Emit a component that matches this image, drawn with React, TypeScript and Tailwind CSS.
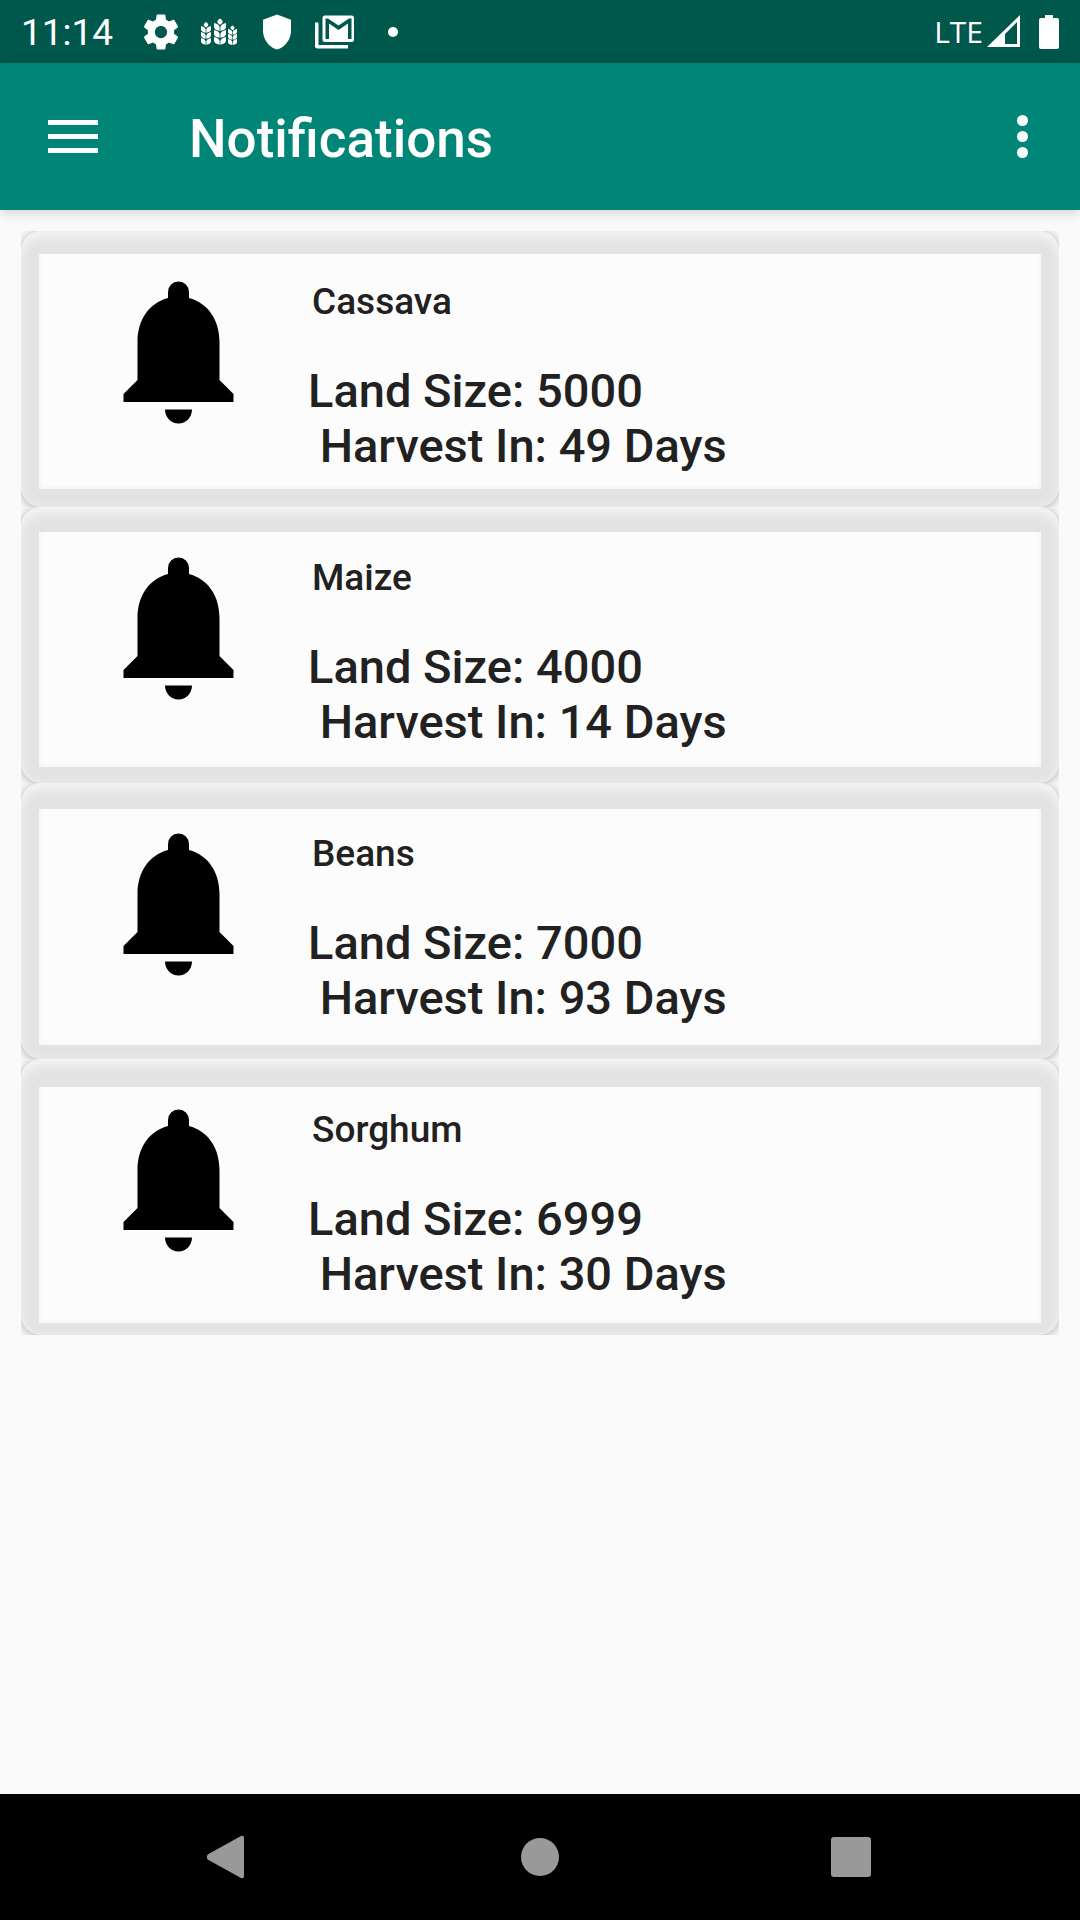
import React from "react";

type Notice = { crop: string; size: string; days: string; frame: string };

const notices: Notice[] = [
  { crop: "Cassava", size: "5000", days: "49", frame: "pt-[23px] pb-[18px]" },
  { crop: "Maize", size: "4000", days: "14", frame: "pt-[25px] pb-[16px]" },
  { crop: "Beans", size: "7000", days: "93", frame: "pt-[26px] pb-[14px]" },
  { crop: "Sorghum", size: "6999", days: "30", frame: "pt-[28px] pb-[12px]" },
];

function Ear({ transform }: { transform: string }) {
  return (
    <g transform={transform}>
      <path d="M5 0c3 2 3 3.500 0 5.500c-3-2-3-3.500 0-5.500z" />
      {[4, 10, 16].map((y) => (
        <g key={y} transform={`translate(0 ${y})`}>
          <path d="M0 0q4.700 1 4.700 4v2.800q-4.700-.6-4.700-3.800z" />
          <path d="M10 0q-4.700 1-4.700 4v2.800q4.700-.6 4.700-3.800z" />
        </g>
      ))}
    </g>
  );
}

function StatusBar() {
  return (
    <div className="flex h-[63px] items-center bg-[#00574b] pl-[21px] pr-[21px] text-white">
      <span className="w-[119px] pt-[2px] text-[37px] leading-[44px]">11:14</span>
      <svg className="size-[42px] shrink-0" viewBox="0 0 24 24" fill="currentColor" aria-hidden="true">
        <path d="M19.430 12.980c.04-.32.07-.64.07-.98s-.03-.66-.07-.98l2.110-1.650c.19-.15.24-.42.12-.64l-2-3.460c-.12-.22-.39-.3-.61-.22l-2.490 1c-.52-.4-1.080-.73-1.690-.98l-.38-2.650C14.460 2.180 14.250 2 14 2h-4c-.25 0-.46.18-.49.42l-.38 2.650c-.61.25-1.170.59-1.690.98l-2.490-1c-.23-.09-.49 0-.61.22l-2 3.460c-.13.22-.07.49.12.64l2.110 1.650c-.04.32-.07.65-.07.98s.03.66.07.98l-2.110 1.650c-.19.15-.24.42-.12.64l2 3.460c.12.22.39.3.61.22l2.490-1c.52.4 1.080.73 1.690.98l.38 2.650c.03.24.24.42.49.42h4c.25 0 .46-.18.49-.42l.38-2.650c.61-.25 1.170-.59 1.690-.98l2.490 1c.23.09.49 0 .61-.22l2-3.460c.12-.22.07-.49-.12-.64l-2.110-1.650zM12 15.500c-1.930 0-3.500-1.570-3.500-3.500s1.570-3.500 3.500-3.500 3.500 1.570 3.500 3.500-1.570 3.500-3.500 3.500z" />
      </svg>
      <svg className="ml-[16px] size-[42px] shrink-0" viewBox="0 0 42 42" fill="currentColor" aria-hidden="true">
        <Ear transform="translate(3 11)" />
        <Ear transform="translate(16 7.500) scale(1.200 1.150)" />
        <Ear transform="translate(30 14.500) scale(.9 .85)" />
      </svg>
      <svg className="ml-[16px] size-[42px] shrink-0" viewBox="0 0 24 24" fill="currentColor" aria-hidden="true">
        <path d="M12 2L4 5v6.090c0 5.050 3.410 9.760 8 10.910 4.590-1.150 8-5.860 8-10.910V5l-8-3z" />
      </svg>
      <svg className="ml-[16px] size-[42px] shrink-0" viewBox="0 0 42 42" fill="currentColor" aria-hidden="true">
        <path
          fillRule="evenodd"
          d="M11 4.500h26.500a2.500 2.500 0 0 1 2.500 2.500v21.500a2.500 2.500 0 0 1-2.500 2.500H11a2.500 2.500 0 0 1-2.500-2.500V7a2.500 2.500 0 0 1 2.500-2.500zM11.500 7.500V28H15V12.500l9.500 6.500 9.500-6.500V28h3.500V7.500h-2.500l-10.500 7-10.500-7z"
        />
        <path d="M1 11.500h3.500V34h29.500v3.500H3.500A2.500 2.500 0 0 1 1 35z" />
      </svg>
      <span className="ml-[32px] size-[10px] rounded-full bg-white" />
      <span className="ml-auto font-['Open_Sans'] text-[30px] leading-[44px]">LTE</span>
      <svg className="ml-[4px] h-[34px] w-[34px] shrink-0" viewBox="0 0 34 34" fill="currentColor" aria-hidden="true">
        <path fillRule="evenodd" d="M33 0v32H0zM30 7L18 19v10h12z" />
      </svg>
      <svg className="ml-[18px] h-[34px] w-[20px] shrink-0" viewBox="0 0 20 34" fill="currentColor" aria-hidden="true">
        <path d="M6 0h8v3h4a2 2 0 0 1 2 2v27a2 2 0 0 1-2 2H2a2 2 0 0 1-2-2V5a2 2 0 0 1 2-2h4z" />
      </svg>
    </div>
  );
}

function Bell() {
  return (
    <svg className="h-[144px] w-[112px]" viewBox="0 0 112 144" aria-hidden="true">
      <path d="M45 17V11a10.500 10.500 0 0 1 21 0v6c19 5 30.500 22 30.500 44v38l14 14v8H.5v-8l14-14V61c0-22 11.500-39 30.500-44zM42 128.500h27a13.500 14 0 0 1-27 0z" />
    </svg>
  );
}

function Card({ notice }: { notice: Notice }) {
  return (
    <li className="overflow-hidden bg-[#f4f4f4]">
      <article
        className={`relative h-[276px] rounded-[20px] bg-[#e3e3e3] px-[18px] shadow-[inset_0_8px_12px_-2px_#f4f4f4,inset_0_0_8px_#ededed,0_1px_7px_rgba(0,0,0,0.28)] ${notice.frame}`}
      >
        <div className="h-full border-r-[3px] border-b-[3px] border-l-[3px] border-[#f8f8f8] bg-[#fcfcfc]" />
        <div className="absolute inset-0 flex pt-[50px] pl-[102px] text-[#212121]">
          <Bell />
          <div className="ml-[73px] font-medium">
            <h2 className="pl-[4px] text-[37px] leading-[42px]">{notice.crop}</h2>
            <p className="mt-[40px] text-[47px] leading-[55px] whitespace-pre">{`Land Size: ${notice.size}\n Harvest In: ${notice.days} Days`}</p>
          </div>
        </div>
      </article>
    </li>
  );
}

export default function App() {
  return (
    <div className="flex min-h-screen flex-col bg-[#fafafa] font-[Roboto,sans-serif]">
      <StatusBar />
      <header className="flex h-[147px] items-center bg-[#008577] pr-[36px] pl-[40px] text-white shadow-[0_2px_12px_rgba(0,0,0,0.18)]">
        <button type="button" aria-label="Open navigation" className="p-[8px]">
          <svg className="h-[34px] w-[50px]" viewBox="0 0 50 34" fill="currentColor">
            <path d="M0 0h50v5H0zM0 14h50v5H0zM0 28h50v5H0z" />
          </svg>
        </button>
        <h1 className="ml-[83px] pt-[4px] text-[53px] leading-[62px] font-medium">Notifications</h1>
        <button type="button" aria-label="More options" className="ml-auto p-[16px]">
          <svg className="h-[43px] w-[11px]" viewBox="0 0 11 43" fill="currentColor">
            <circle cx="5.500" cy="5.500" r="5.500" />
            <circle cx="5.500" cy="21.500" r="5.500" />
            <circle cx="5.500" cy="37.500" r="5.500" />
          </svg>
        </button>
      </header>
      <main className="flex-1 p-[21px]">
        <ul>
          {notices.map((n) => (
            <Card key={n.crop} notice={n} />
          ))}
        </ul>
      </main>
      <nav className="flex h-[126px] items-center justify-center gap-[229px] bg-black text-[#999999]">
        <button type="button" aria-label="Back" className="p-[20px]">
          <svg className="size-[44px]" viewBox="0 0 44 44" fill="currentColor">
            <path d="M1.500 19L34 1q3-1 3 2v38q0 3-3 2L1.500 25q-4-3 0-6z" />
          </svg>
        </button>
        <button type="button" aria-label="Home" className="p-[20px]">
          <svg className="size-[40px]" viewBox="0 0 40 40" fill="currentColor">
            <circle cx="20" cy="20" r="19" />
          </svg>
        </button>
        <button type="button" aria-label="Recent apps" className="p-[20px]">
          <svg className="size-[44px]" viewBox="0 0 44 44" fill="currentColor">
            <rect x="2" y="2" width="40" height="40" rx="3" />
          </svg>
        </button>
      </nav>
    </div>
  );
}
